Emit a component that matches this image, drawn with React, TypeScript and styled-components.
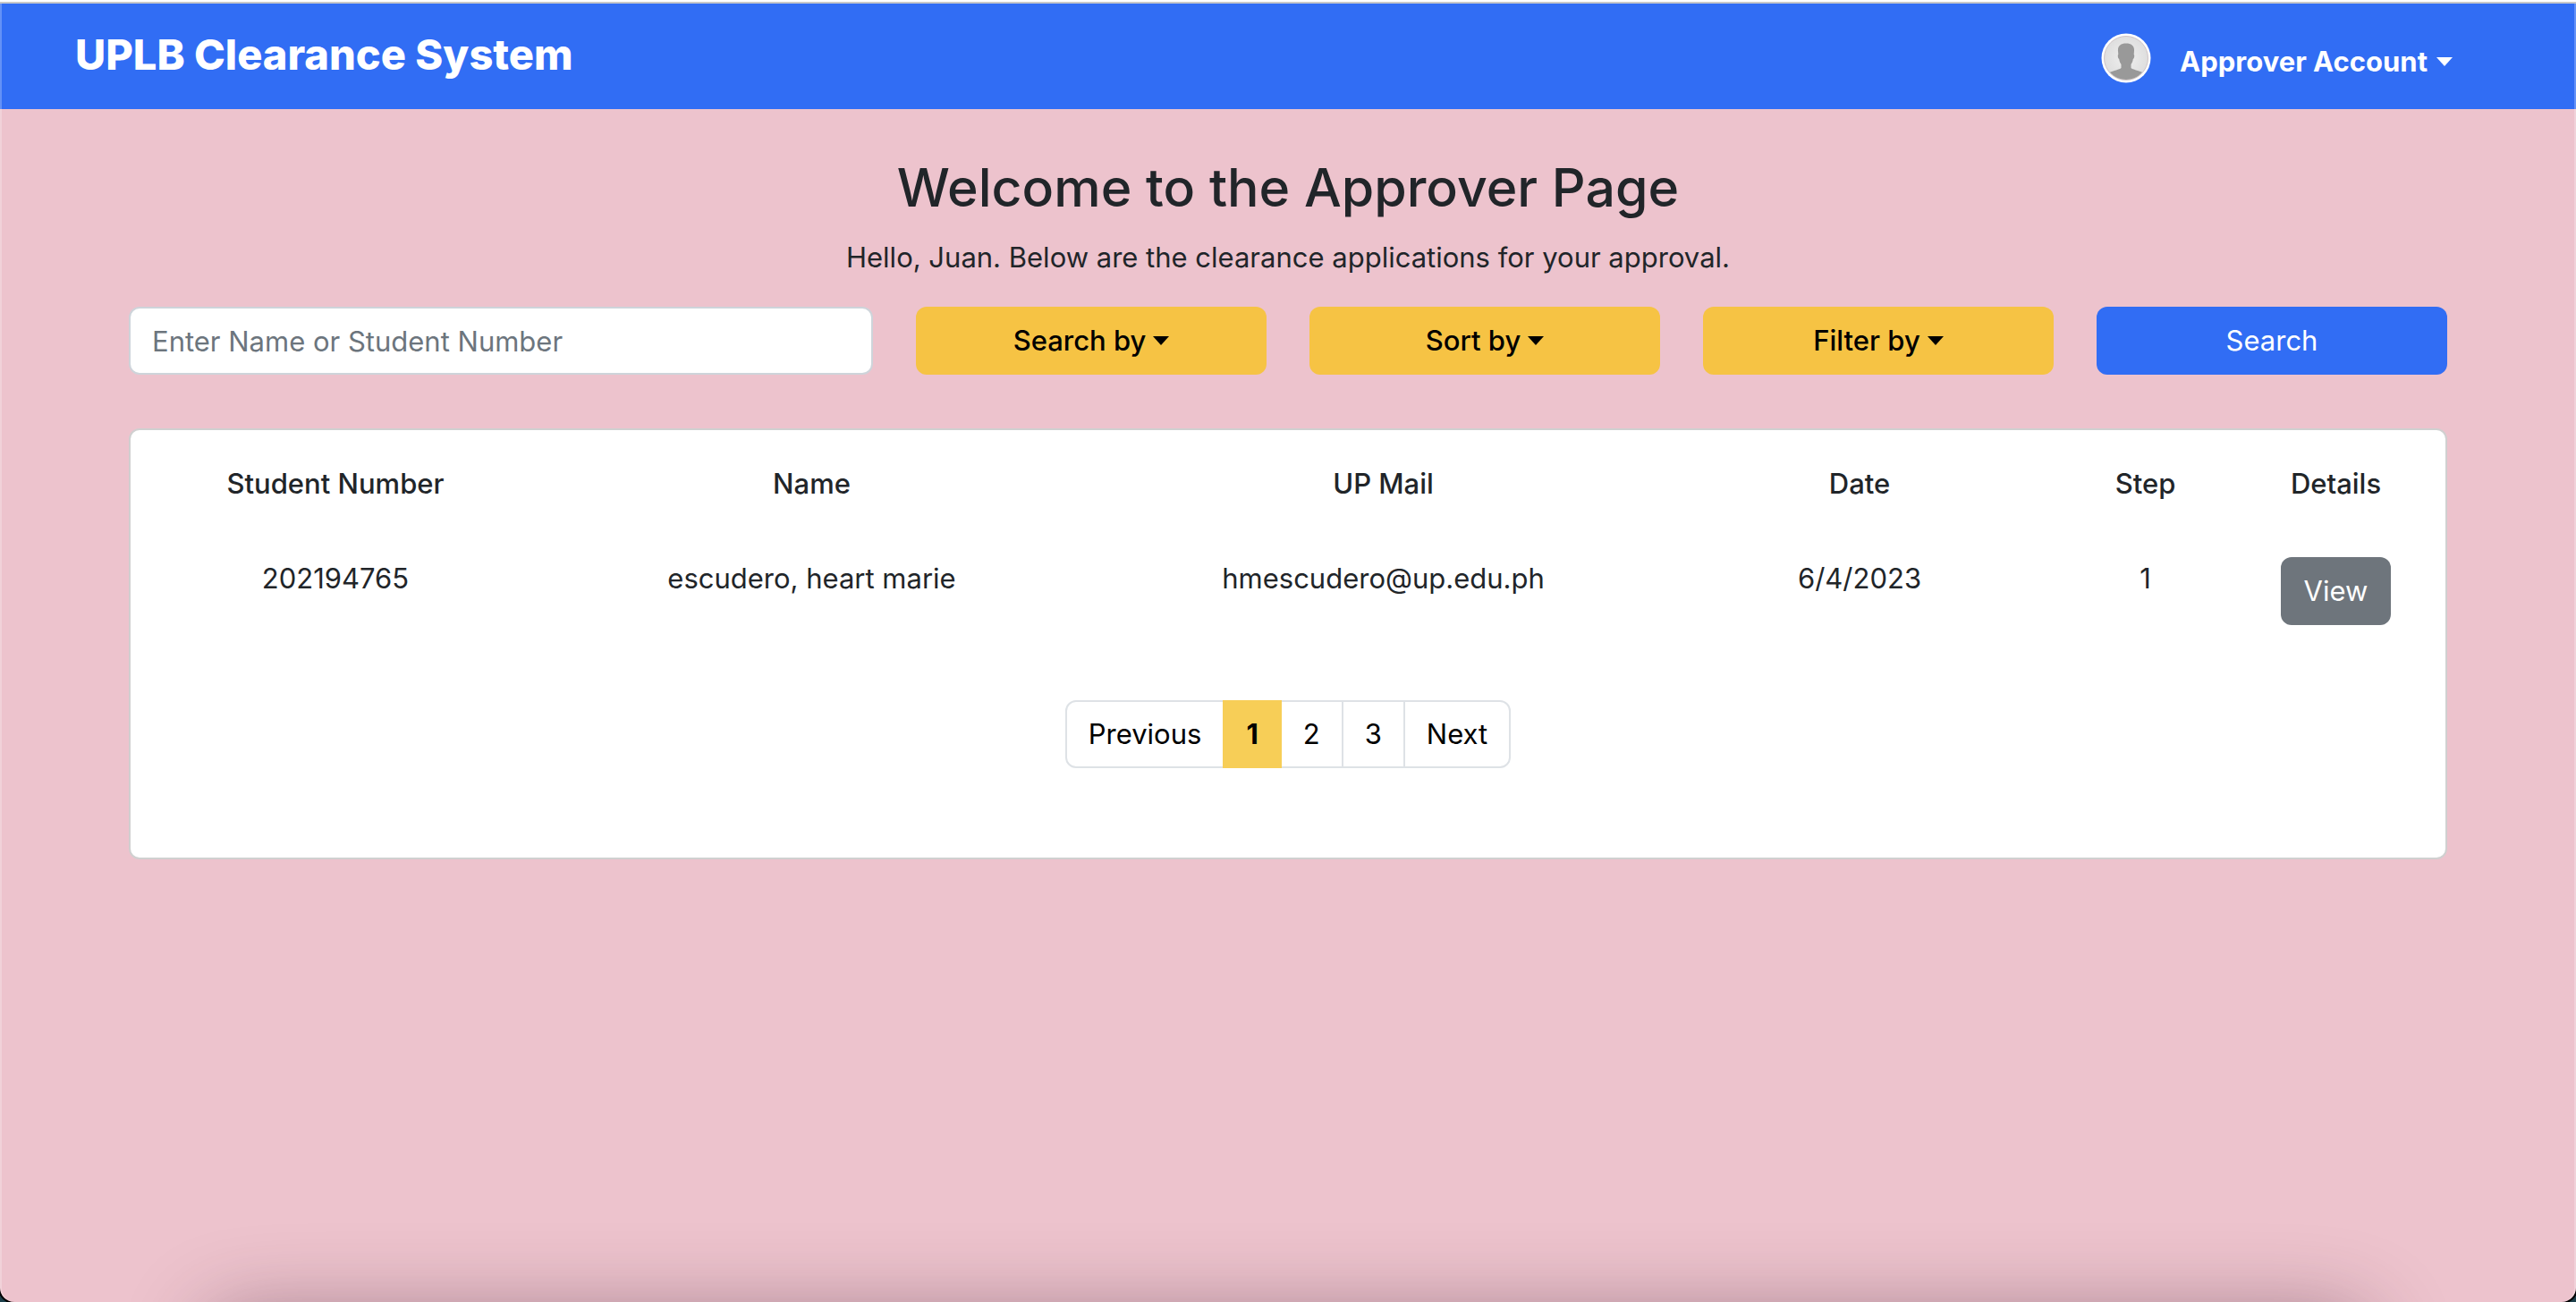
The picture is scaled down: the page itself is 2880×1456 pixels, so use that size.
import React from "react";
import styled, { createGlobalStyle } from "styled-components";

const GlobalStyle = createGlobalStyle`
  *, *::before, *::after { box-sizing: border-box; }
  html { height: 100%; background: #1d3f4a; }
  body {
    margin: 0;
    height: 100%;
    color: #212529;
    font-family: Inter, "Noto Sans", "Liberation Sans", sans-serif;
    font-size: 31px;
    line-height: 48px;
  }
  #root { height: 100%; }
  button, input { font: inherit; color: inherit; }
  h1, p { margin: 0; }
`;

const Window = styled.div`
  position: relative;
  min-height: 100%;
  display: flex;
  flex-direction: column;
  overflow: hidden;
  background: #edc3cd;
  border-radius: 0 0 16px 16px;
  border-top: 2px solid #ffffff;
  box-shadow: 0 0 0 2px #000000;

  &::before {
    content: "";
    position: absolute;
    inset: 2px 0 0;
    border: solid rgba(255, 255, 255, 0.25);
    border-width: 0 2px;
    border-radius: 0 0 16px 16px;
    pointer-events: none;
  }
`;

const DockShadow = styled.div`
  position: absolute;
  top: 100%;
  left: 230px;
  right: 230px;
  height: 120px;
  margin-top: 12px;
  border-radius: 40px;
  box-shadow: 0 0 90px rgba(60, 30, 50, 0.42);
  pointer-events: none;
`;

const Navbar = styled.header`
  display: flex;
  align-items: center;
  justify-content: space-between;
  height: 120px;
  padding: 0 138px 0 84px;
  border-top: 2px solid #c8c8c8;
  background: #316df4;
  color: #ffffff;
`;

const Brand = styled.a`
  padding-bottom: 4px;
  color: inherit;
  font-size: 47px;
  font-weight: 800;
  text-decoration: none;
`;

const Account = styled.div`
  display: flex;
  align-items: center;
  gap: 32px;
  padding-top: 4px;
`;

const Avatar = styled.svg`
  width: 56px;
  height: 56px;
`;

const AccountButton = styled.button`
  display: flex;
  align-items: center;
  gap: 10px;
  padding: 8px 0 0;
  border: 0;
  background: none;
  font-weight: 700;
`;

const Caret = styled.span`
  border: solid transparent;
  border-width: 10px 9px 0;
  border-top-color: currentColor;
`;

const Main = styled.main`
  display: flex;
  flex-direction: column;
  padding: 50px 144px;
`;

const Heading = styled.h1`
  margin-bottom: 16px;
  font-size: 59px;
  font-weight: 500;
  line-height: 76px;
  text-align: center;
`;

const Intro = styled.p`
  margin-bottom: 31px;
  text-align: center;
`;

const SearchForm = styled.form`
  display: grid;
  grid-template-columns: repeat(12, 1fr);
  gap: 48px;
  margin-bottom: 60px;
`;

const SearchInput = styled.input`
  grid-column: span 4;
  min-width: 0;
  height: 76px;
  padding: 12px 24px;
  border: 2px solid #ced4da;
  border-radius: 12px;
  background: #ffffff;

  &::placeholder { color: #6c757d; opacity: 1; }
`;

const buttonColors = {
  primary: { background: "#316df4", color: "#ffffff" },
  secondary: { background: "#6e757c", color: "#ffffff" },
  warning: { background: "#f6c344", color: "#000000" },
};

const Button = styled.button<{ $tone: keyof typeof buttonColors }>`
  display: inline-flex;
  align-items: center;
  justify-content: center;
  gap: 8px;
  grid-column: span 2;
  height: 76px;
  padding: 0 26px;
  border: 0;
  border-radius: 12px;
  background: ${(p) => buttonColors[p.$tone].background};
  color: ${(p) => buttonColors[p.$tone].color};
  font-weight: ${(p) => (p.$tone === "warning" ? 500 : 400)};
`;

const Card = styled.section`
  display: flex;
  flex-direction: column;
  align-items: center;
  padding: 36px 16px 100px;
  border: 2px solid #d0d0d0;
  border-radius: 12px;
  background: #ffffff;
`;

const Table = styled.table`
  width: 100%;
  margin-bottom: 84px;
  border-collapse: collapse;
  table-layout: fixed;
  text-align: center;
`;

const Th = styled.th<{ $span: number }>`
  width: calc(100% * ${(p) => p.$span} / 12);
  padding: 0 0 58px;
  font-weight: 500;
`;

const Td = styled.td`
  padding: 0;
  vertical-align: top;
`;

const ActionCell = styled(Td)`
  line-height: 0;

  & > button { line-height: 48px; }
`;

const Pagination = styled.nav`
  display: flex;
  border: 2px solid #dee2e6;
  border-radius: 12px;
`;

const PageButton = styled.button<{ $active?: boolean; $divided?: boolean }>`
  height: ${(p) => (p.$active ? 76 : 72)}px;
  margin: ${(p) => (p.$active ? "-2px 0" : "0")};
  padding: 0 ${(p) => (p.$active ? 26 : 24)}px;
  border: 0;
  border-left: ${(p) => (p.$divided ? "2px solid #dee2e6" : "0")};
  background: ${(p) => (p.$active ? "#f7ce57" : "none")};
  color: #000000;
  font-weight: ${(p) => (p.$active ? 700 : 400)};
`;

const columns = [
  { label: "Student Number", span: 2 },
  { label: "Name", span: 3 },
  { label: "UP Mail", span: 3 },
  { label: "Date", span: 2 },
  { label: "Step", span: 1 },
  { label: "Details", span: 1 },
];

const applications = [
  {
    studentNumber: "202194765",
    name: "escudero, heart marie",
    mail: "hmescudero@up.edu.ph",
    date: "6/4/2023",
    step: 1,
  },
];

const pages = [
  { label: "Previous" },
  { label: "1", active: true },
  { label: "2" },
  { label: "3", divided: true },
  { label: "Next", divided: true },
];

function UserAvatar() {
  return (
    <Avatar viewBox="0 0 56 56" role="img" aria-label="User avatar">
      <defs>
        <radialGradient id="avatar-fill">
          <stop offset="0" stopColor="#f0f0f0" />
          <stop offset="1" stopColor="#dedede" />
        </radialGradient>
        <clipPath id="avatar-clip">
          <circle cx="28" cy="28" r="24" />
        </clipPath>
      </defs>
      <circle cx="28" cy="28" r="27.5" fill="#ffffff" />
      <circle cx="28" cy="28" r="24.5" fill="url(#avatar-fill)" stroke="#cfc4c6" />
      <path
        clipPath="url(#avatar-clip)"
        fill="#999999"
        d="M28 11.500c-6 0-9.500 3-9 8.500l.3 4c-1 .3-.5 4.500.9 5 .4 3 1.200 4.500 2.300 6v4c-2 2-8 2.500-14 5.500v9h39v-9c-6-3-12-3.500-14-5.500v-4c1.100-1.500 1.900-3 2.300-6 1.400-.5 1.900-4.700.9-5l.3-4c.5-5.500-3-8.500-9-8.500z"
      />
    </Avatar>
  );
}

export default function App() {
  return (
    <>
      <GlobalStyle />
      <Window>
        <Navbar>
          <Brand href="#">UPLB Clearance System</Brand>
          <Account>
            <UserAvatar />
            <AccountButton type="button">
              Approver Account
              <Caret />
            </AccountButton>
          </Account>
        </Navbar>
        <Main>
          <Heading>Welcome to the Approver Page</Heading>
          <Intro>Hello, Juan. Below are the clearance applications for your approval.</Intro>
          <SearchForm onSubmit={(e) => e.preventDefault()}>
            <SearchInput
              type="text"
              aria-label="Enter Name or Student Number"
              placeholder="Enter Name or Student Number"
            />
            {["Search by", "Sort by", "Filter by"].map((label) => (
              <Button key={label} type="button" $tone="warning">
                {label}
                <Caret />
              </Button>
            ))}
            <Button type="submit" $tone="primary">Search</Button>
          </SearchForm>
          <Card>
            <Table>
              <thead>
                <tr>
                  {columns.map((c) => (
                    <Th key={c.label} scope="col" $span={c.span}>{c.label}</Th>
                  ))}
                </tr>
              </thead>
              <tbody>
                {applications.map((a) => (
                  <tr key={a.studentNumber}>
                    <Td>{a.studentNumber}</Td>
                    <Td>{a.name}</Td>
                    <Td>{a.mail}</Td>
                    <Td>{a.date}</Td>
                    <Td>{a.step}</Td>
                    <ActionCell>
                      <Button type="button" $tone="secondary">View</Button>
                    </ActionCell>
                  </tr>
                ))}
              </tbody>
            </Table>
            <Pagination aria-label="Pages">
              {pages.map((p) => (
                <PageButton key={p.label} type="button" $active={p.active} $divided={p.divided}>
                  {p.label}
                </PageButton>
              ))}
            </Pagination>
          </Card>
        </Main>
        <DockShadow />
      </Window>
    </>
  );
}
